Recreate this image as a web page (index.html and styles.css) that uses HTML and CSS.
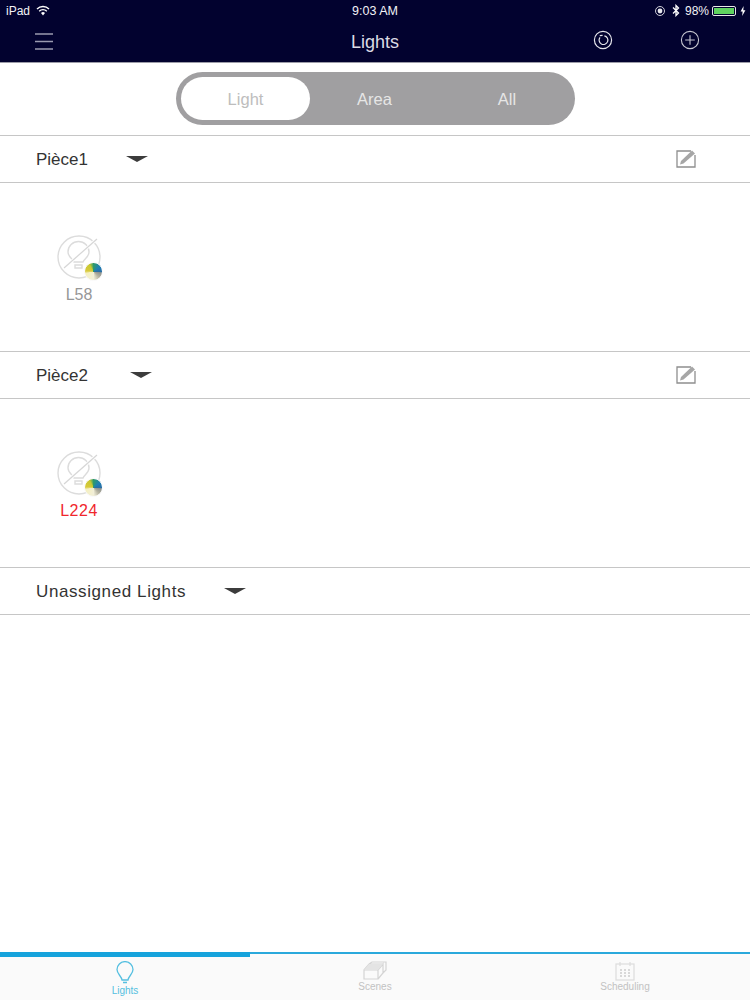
FILE: index.html
```html
<!DOCTYPE html>
<html lang="en">
<head>
<meta charset="utf-8">
<title>Lights</title>
<link rel="stylesheet" href="styles.css">
</head>
<body>
<div class="app">
  <header class="top">
    <div class="status">
      <div class="status-left">
        <span>iPad</span>
        <svg class="wifi" viewBox="0 0 14 11" width="14" height="11"><path d="M1 4 A8.5 8.5 0 0 1 13 4" fill="none" stroke="#fff" stroke-width="1.4"/><path d="M3.2 6.2 A5.4 5.4 0 0 1 10.8 6.2" fill="none" stroke="#fff" stroke-width="1.4"/><path d="M7 10.5 L5 8 A3 3 0 0 1 9 8 Z" fill="#fff"/></svg>
      </div>
      <div class="status-time">9:03 AM</div>
      <div class="status-right">
        <svg viewBox="0 0 12 12" width="12" height="12"><circle cx="6" cy="6" r="4.5" fill="none" stroke="#cfcfd8" stroke-width="1"/><circle cx="6" cy="6" r="2.4" fill="#e8e8ee"/></svg>
        <svg class="bt" viewBox="0 0 8 13" width="8" height="13"><path d="M1 3.5 L6.5 9 L4 11.5 V1.5 L6.5 4 L1 9.5" fill="none" stroke="#fff" stroke-width="1.3"/></svg>
        <span>98%</span>
        <span class="battery"><span class="battery-fill"></span></span>
        <svg viewBox="0 0 6 10" width="6" height="10"><path d="M3.6 0 L0.6 5.6 H2.6 L2.2 10 L5.4 4.2 H3.3 Z" fill="#fff"/></svg>
      </div>
    </div>
    <nav class="nav">
      <svg class="menu" viewBox="0 0 18 17" width="18" height="17"><path d="M0 1 H18 M0 8.5 H18 M0 16 H18" stroke="#9a9ab0" stroke-width="1.4"/></svg>
      <div class="title">Lights</div>
      <svg class="refresh" viewBox="0 0 20 20" width="20" height="20"><circle cx="10" cy="10" r="8.6" fill="none" stroke="#e4e4ea" stroke-width="1.2"/><path d="M7 7.4 A4.4 4.4 0 1 0 11.4 5.8" fill="none" stroke="#e4e4ea" stroke-width="1.2"/><path d="M6.8 5.6 L9.6 5.4" stroke="#e4e4ea" stroke-width="1.2"/></svg>
      <svg class="add" viewBox="0 0 20 20" width="20" height="20"><circle cx="10" cy="10" r="8.6" fill="none" stroke="#c6c6d0" stroke-width="1.1"/><path d="M5.2 10 H14.8 M10 5.2 V14.8" stroke="#c6c6d0" stroke-width="1.1"/></svg>
    </nav>
  </header>

  <div class="segment-wrap">
    <div class="segment">
      <div class="seg seg-active">Light</div>
      <div class="seg">Area</div>
      <div class="seg">All</div>
    </div>
  </div>

  <section>
    <div class="row">
      <span class="row-name">Pièce1</span>
      <span class="caret caret-1"></span>
      <svg class="edit" viewBox="0 0 20 19" width="20" height="19"><path d="M15 2 H1 V18 H19 V6" fill="none" stroke="#8f8f8f" stroke-width="1.3"/><path d="M4 15.5 L5 12 L16 1.5 L19 4.5 L7.5 14.5 Z" fill="#a6a6a6"/></svg>
    </div>
    <div class="group">
      <div class="light">
        <svg class="light-icon" viewBox="0 0 46 46" width="46" height="46">
          <circle cx="22" cy="22" r="21" fill="none" stroke="#dcdcdc" stroke-width="1.4"/>
          <path d="M17 27 C16 24 11 22 11 17 A10.5 10.5 0 0 1 32 17 C32 22 27 24 26 27 Z M18 30 H25 V33 H18 Z" fill="none" stroke="#dcdcdc" stroke-width="1.4"/>
          <path d="M7 33 L40 4" stroke="#fff" stroke-width="3"/>
          <path d="M7 33 L40 4" stroke="#d6d6d6" stroke-width="1.2"/>
        </svg>
        <span class="badge"></span>
        <div class="light-name">L58</div>
      </div>
    </div>
  </section>

  <section>
    <div class="row">
      <span class="row-name">Pièce2</span>
      <span class="caret caret-2"></span>
      <svg class="edit" viewBox="0 0 20 19" width="20" height="19"><path d="M15 2 H1 V18 H19 V6" fill="none" stroke="#8f8f8f" stroke-width="1.3"/><path d="M4 15.5 L5 12 L16 1.5 L19 4.5 L7.5 14.5 Z" fill="#a6a6a6"/></svg>
    </div>
    <div class="group">
      <div class="light">
        <svg class="light-icon" viewBox="0 0 46 46" width="46" height="46">
          <circle cx="22" cy="22" r="21" fill="none" stroke="#dcdcdc" stroke-width="1.4"/>
          <path d="M17 27 C16 24 11 22 11 17 A10.5 10.5 0 0 1 32 17 C32 22 27 24 26 27 Z M18 30 H25 V33 H18 Z" fill="none" stroke="#dcdcdc" stroke-width="1.4"/>
          <path d="M7 33 L40 4" stroke="#fff" stroke-width="3"/>
          <path d="M7 33 L40 4" stroke="#d6d6d6" stroke-width="1.2"/>
        </svg>
        <span class="badge"></span>
        <div class="light-name light-name-alert">L224</div>
      </div>
    </div>
  </section>

  <section>
    <div class="row row-last">
      <span class="row-name row-name-wide">Unassigned Lights</span>
      <span class="caret caret-3"></span>
    </div>
  </section>

  <div class="spacer"></div>

  <footer class="tabs">
    <div class="indicator"><span class="indicator-on"></span></div>
    <div class="tab-row">
      <div class="tab tab-active">
        <svg viewBox="0 0 18 24" width="18" height="24"><path d="M6 19 C5.5 15 1 13 1 8.6 A8 8 0 0 1 17 8.6 C17 13 12.5 15 12 19 Z M7 21.5 H11" fill="none" stroke="#55bfe0" stroke-width="1.3"/></svg>
        <span>Lights</span>
      </div>
      <div class="tab">
        <svg viewBox="0 0 24 20" width="24" height="20"><path d="M1 9 H15 V18 H1 Z M1 9 L6 3 H20 M15 9 L20 3 V12 L15 18 M6 3 L9 1 H23 V9 L20 12" fill="none" stroke="#d4d4d4" stroke-width="1.2"/><path d="M6 3 H20 L15 9 H1 Z" fill="#e4e4e4"/></svg>
        <span>Scenes</span>
      </div>
      <div class="tab">
        <svg viewBox="0 0 20 20" width="20" height="20"><rect x="1" y="3" width="18" height="16" fill="none" stroke="#dcdcdc" stroke-width="1.2"/><path d="M5 1 V5 M15 1 V5" stroke="#dcdcdc" stroke-width="1.2"/><path d="M5 9 H7 M9 9 H11 M13 9 H15 M5 12 H7 M9 12 H11 M13 12 H15 M5 15 H7 M9 15 H11 M13 15 H15" stroke="#cdcdcd" stroke-width="1.4"/></svg>
        <span>Scheduling</span>
      </div>
    </div>
  </footer>
</div>
</body>
</html>
```
FILE: styles.css
```css
* { box-sizing: border-box; }
html, body { margin: 0; padding: 0; }
body {
  font-family: "Liberation Sans", Arial, sans-serif;
  color: #333;
  background: #fff;
}
.app {
  width: 750px;
  height: 1000px;
  display: flex;
  flex-direction: column;
  overflow: hidden;
}
.top {
  height: 63px;
  background: #02022f;
  color: #fff;
  border-bottom: 1px solid #9c9ca8;
  flex: none;
}
.status {
  height: 21px;
  padding: 0 4px 0 6px;
  display: grid;
  grid-template-columns: 1fr auto 1fr;
  align-items: center;
  font-size: 12px;
  color: #f2f2f6;
}
.status-left { display: flex; align-items: center; gap: 6px; }
.status-time { font-size: 12.5px; margin-left: -2px; }
.status-right { display: flex; align-items: center; justify-content: flex-end; gap: 4px; font-size: 12px; }
.bt { margin: 0 1px 0 2px; }
.battery {
  width: 24px;
  height: 10px;
  border: 1px solid #e8e8e8;
  border-radius: 2px;
  padding: 1px;
  display: block;
  margin-left: -1px;
}
.battery-fill { display: block; height: 100%; width: 100%; background: #5fd35f; }
.nav {
  position: relative;
  height: 41px;
  display: block;
}
.menu { position: absolute; left: 35px; top: 12px; }
.title {
  text-align: center;
  font-size: 18px;
  line-height: 43px;
  color: #dcdce4;
}
.refresh { position: absolute; left: 593px; top: 9px; }
.add { position: absolute; left: 680px; top: 9px; }
.segment-wrap {
  flex: none;
  height: 72px;
  padding-top: 9px;
  display: flex;
  justify-content: center;
}
.segment {
  width: 399px;
  height: 53px;
  background: #a09fa1;
  border-radius: 27px;
  padding: 5px 0 5px 5px;
  display: flex;
  align-items: stretch;
  margin-left: 1px;
}
.seg {
  flex: none;
  display: flex;
  align-items: center;
  justify-content: center;
  font-size: 16.5px;
  padding-top: 2px;
  color: #e6e6e6;
}
.seg-active {
  background: #fff;
  color: #bdbdbd;
  border-radius: 22px;
  width: 129px;
}
.seg:nth-child(2) { width: 129px; }
.seg:nth-child(3) { width: 136px; }
.row {
  height: 48px;
  border-top: 1.5px solid #c6c6c6;
  border-bottom: 1.5px solid #c6c6c6;
  padding-left: 36px;
  padding-right: 54px;
  display: flex;
  align-items: center;
  font-size: 17px;
  color: #333;
}
.row-name { flex: none; margin-top: 1px; }
.row-name-wide { letter-spacing: 0.6px; }
.caret {
  width: 0;
  height: 0;
  border-left: 11px solid transparent;
  border-right: 11px solid transparent;
  border-top: 6px solid #3c3c3c;
  flex: none;
}
.caret-1 { margin-left: 38px; }
.caret-2 { margin-left: 42px; }
.caret-3 { margin-left: 38px; }
.edit { margin: -2px 0 0 auto; }
.group {
  height: 168px;
  padding: 52px 0 0 57px;
}
.light { width: 46px; position: relative; }
.light-icon { display: block; }
.badge {
  position: absolute;
  left: 27px;
  top: 27px;
  width: 19px;
  height: 19px;
  border-radius: 50%;
  border: 1.5px solid #fafafa;
  background: conic-gradient(#2f9a6a 0deg, #1f7fb5 55deg, #2a6fa5 90deg, #8f9490 100deg, #b5b2a0 135deg, #f2efd8 180deg, #f5f0c0 255deg, #d8c93a 275deg, #c8c832 330deg, #2f9a6a 360deg);
}
.light-name {
  width: 46px;
  text-align: center;
  font-size: 16px;
  line-height: 18px;
  margin: 5px 0 0 -1px;
  color: #979797;
  white-space: nowrap;
}
.light-name-alert { color: #f0262c; letter-spacing: 0.5px; }
.spacer { flex: 1; }
.tabs { flex: none; height: 48px; background: #fafafa; }
.indicator {
  height: 5px;
  position: relative;
  background: linear-gradient(#2aa9dc 0 2px, #fbfbfb 2px);
}
.indicator-on {
  display: block;
  width: 250px;
  height: 5px;
  background: #16a3dc;
}
.tab-row { display: flex; height: 43px; }
.tab {
  flex: 1;
  display: flex;
  flex-direction: column;
  align-items: center;
  justify-content: flex-start;
  padding-top: 4px;
  font-size: 10px;
  color: #c2c2c2;
}
.tab span { line-height: 10px; margin-top: 1px; }
.tab svg { display: block; }
.tab-active { color: #55bfe0; }
```
